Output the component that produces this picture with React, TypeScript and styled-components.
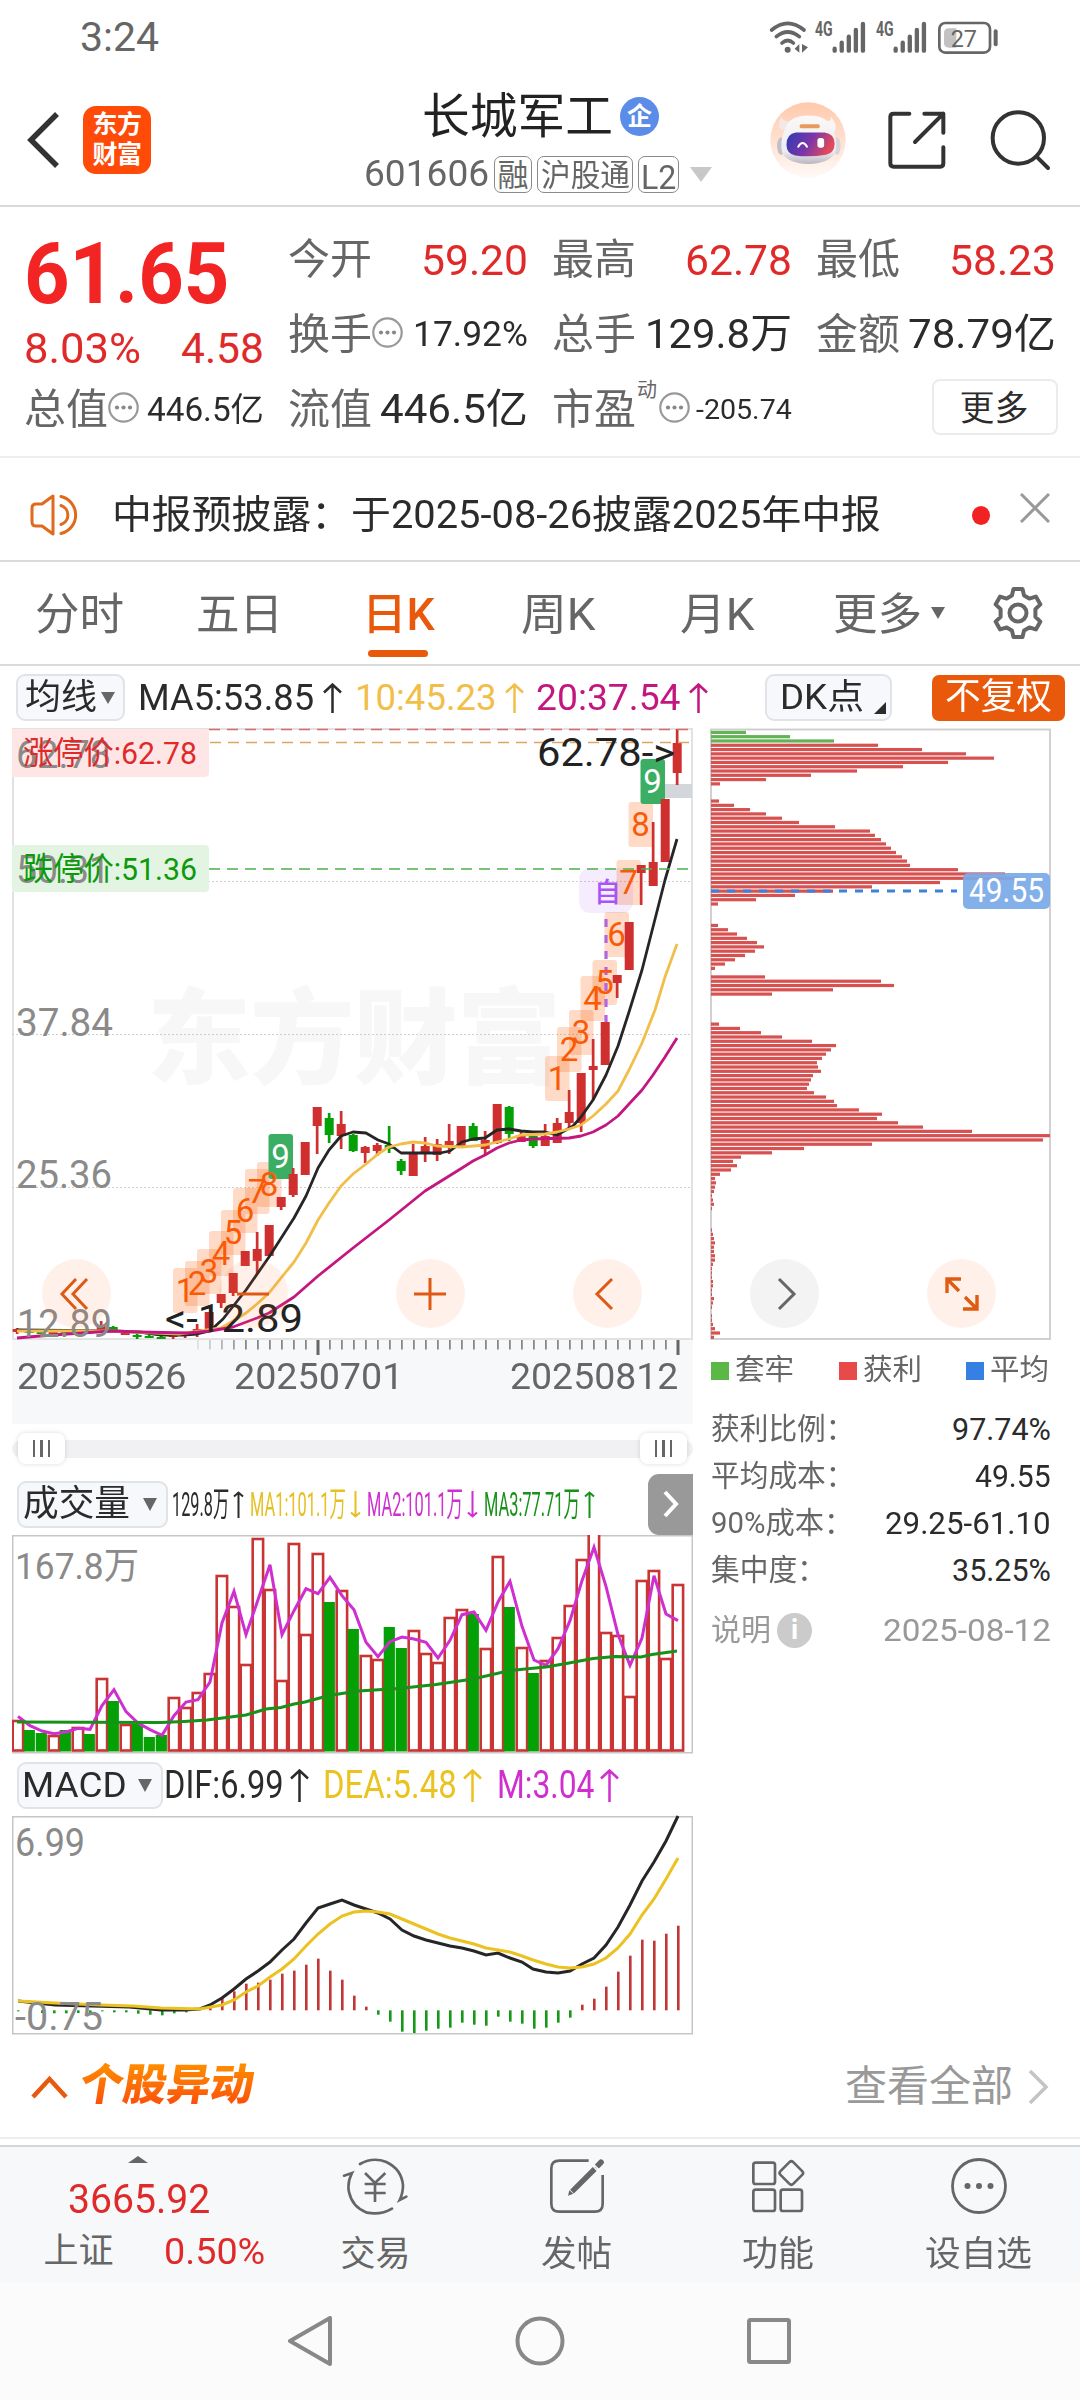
import React, { useLayoutEffect, useRef } from "react";
import styled, { createGlobalStyle, css } from "styled-components";

const FONT = `Roboto, "Noto Sans CJK SC", sans-serif`;
const RED = "#e02a2a";
const GREY = "#666666";
const INK = "#2b2b2b";
const ORANGE = "#e8590c";
const UP = "#cf2f2f";
const DOWN = "#05a005";

const GlobalStyle = createGlobalStyle`
  * { box-sizing: border-box; }
  body { margin: 0; background: #fff; font-family: ${FONT}; color: ${INK}; }
  svg { display: block; flex: none; }
  svg text { font-family: ${FONT}; }
`;

/* ---------- auto-fitting label ---------- */

const FitBox = styled.span<{ $w: number; $s: number; $c?: string; $b?: number; $ml?: number }>`
  display: block;
  flex: none;
  width: ${(p) => p.$w}px;
  height: ${(p) => Math.round(p.$s * 1.2)}px;
  line-height: ${(p) => Math.round(p.$s * 1.2)}px;
  font-size: ${(p) => p.$s}px;
  font-weight: ${(p) => p.$b ?? 400};
  margin-left: ${(p) => p.$ml ?? 0}px;
  color: ${(p) => p.$c ?? INK};
`;
const FitInner = styled.span`
  display: inline-block;
  white-space: nowrap;
  transform-origin: 0 50%;
`;

type FitProps = { w: number; s: number; c?: string; b?: number; ml?: number; children: React.ReactNode };
function Fit({ w, s, c, b, ml, children }: FitProps) {
  const ref = useRef<HTMLSpanElement>(null);
  useLayoutEffect(() => {
    const el = ref.current;
    if (el && el.offsetWidth) el.style.transform = `scaleX(${w / el.offsetWidth})`;
  }, [w, s, children]);
  return (
    <FitBox $w={w} $s={s} $c={c} $b={b} $ml={ml}>
      <FitInner ref={ref}>{children}</FitInner>
    </FitBox>
  );
}

/* ---------- shared small parts ---------- */

const Page = styled.main`
  width: 1080px;
  height: 2400px;
  display: flex;
  flex-direction: column;
  overflow: hidden;
  background: #fff;
`;

const Shift = styled.div<{ $l?: number; $t?: number }>`
  flex: none;
  margin-left: ${(p) => p.$l ?? 0}px;
  margin-top: ${(p) => p.$t ?? 0}px;
`;

const Caret = styled.i<{ $w: number; $h: number; $c?: string; $ml?: number; $up?: boolean }>`
  flex: none;
  width: 0;
  height: 0;
  margin-left: ${(p) => p.$ml ?? 0}px;
  border-left: ${(p) => p.$w / 2}px solid transparent;
  border-right: ${(p) => p.$w / 2}px solid transparent;
  ${(p) =>
    p.$up
      ? css`border-bottom: ${p.$h}px solid ${p.$c ?? GREY};`
      : css`border-top: ${p.$h}px solid ${p.$c ?? GREY};`}
`;

function Arrow({ w, h, c, down, ml }: { w: number; h: number; c: string; down?: boolean; ml: number }) {
  const m = w / 2;
  const d = down
    ? `M${m} 0V${h - 1}M1 ${h - m}L${m} ${h - 1.5}L${w - 1} ${h - m}`
    : `M${m} ${h}V1M1 ${m}L${m} 1.5L${w - 1} ${m}`;
  return (
    <Shift $l={ml}>
      <svg width={w} height={h} fill="none" stroke={c} strokeWidth={w < 15 ? 2 : 2.5}>
        <path d={d} />
      </svg>
    </Shift>
  );
}

function Dots() {
  return (
    <Shift $t={-5}>
      <svg width="31" height="31" viewBox="0 0 31 31" fill="none" stroke="#999" strokeWidth="2.2">
        <circle cx="15.5" cy="15.5" r="14.2" />
        <g fill="#888" stroke="none">
          <circle cx="9" cy="15.5" r="2.1" />
          <circle cx="15.5" cy="15.5" r="2.1" />
          <circle cx="22" cy="15.5" r="2.1" />
        </g>
      </svg>
    </Shift>
  );
}

/* ---------- status bar ---------- */

const StatusRow = styled.header`
  height: 74px;
  flex: none;
  display: flex;
  align-items: center;
  justify-content: space-between;
  padding: 1px 80px 0 80px;
`;

function StatusIcons() {
  const bars = (x: number) =>
    [0, 1, 2, 3, 4].map((i) => (
      <line key={i} x1={x + i * 21.2} x2={x + i * 21.2} y1={[112, 94, 76, 56, 38][i]} y2={118} />
    ));
  return (
    <svg width="231" height="36" viewBox="28 26 693 108" fill="none" stroke={GREY} strokeLinecap="round">
      <g strokeWidth="11">
        <path d="M36 56Q84 16 133 56" />
        <path d="M50 76Q84 48 119 76" />
        <path d="M67 95Q84 80 101 95" />
      </g>
      <circle cx="84" cy="115" r="9" fill={GREY} stroke="none" />
      <path d="M119 98V124L105 112ZM127 98V124L145 108Z" fill={GREY} stroke="none" />
      <g strokeWidth="13">
        {bars(225)}
        {bars(408)}
      </g>
      <g fill={GREY} stroke="none" fontSize="58" fontWeight="700">
        <text x="166" y="74" textLength="53" lengthAdjust="spacingAndGlyphs">4G</text>
        <text x="349" y="74" textLength="53" lengthAdjust="spacingAndGlyphs">4G</text>
      </g>
      <path d="M568 51H590V109H568Q553 109 553 95V65Q553 51 568 51Z" fill="#c2c2c2" stroke="none" />
      <rect x="539" y="35" width="152" height="89" rx="18" strokeWidth="8" />
      <line x1="708" x2="708" y1="60" y2="99" strokeWidth="12" />
      <text x="573" y="106" fontSize="74" fill={GREY} stroke="none" textLength="79" lengthAdjust="spacingAndGlyphs">27</text>
    </svg>
  );
}

/* ---------- title bar ---------- */

const TitleBar = styled.header`
  height: 133px;
  flex: none;
  display: grid;
  grid-template-columns: 362px 352px 1fr;
  border-bottom: 2px solid #dadada;
`;
const BrandSide = styled.div`
  display: flex;
  align-items: center;
  padding-left: 27px;
  gap: 23px;
`;
const Logo = styled.div`
  width: 68px;
  height: 68px;
  border-radius: 13px;
  background: #ff4a08;
  color: #fff;
  font-size: 25px;
  font-weight: 700;
  line-height: 30px;
  letter-spacing: -0.5px;
  display: grid;
  align-content: center;
  justify-content: center;
`;
const TitleMid = styled.div`
  padding-top: 18px;
  display: flex;
  flex-direction: column;
  gap: 14px;
`;
const TitleLine = styled.div`
  display: flex;
  align-items: center;
  height: 49px;
  padding: 1px 0 0 60px;
`;
const EntBadge = styled.span`
  width: 39px;
  height: 39px;
  margin: -2px 0 0 7px;
  border-radius: 50%;
  background: #5b8ce8;
  color: #fff;
  font-size: 25px;
  font-weight: 700;
  display: grid;
  place-items: center;
  line-height: 39px;
`;
const CodeLine = styled.div`
  display: flex;
  align-items: center;
  height: 38px;
  gap: 5px;
  padding-left: 2px;
`;
const Tag = styled.span<{ $w: number }>`
  width: ${(p) => p.$w}px;
  height: 37px;
  border: 1.5px solid #8a8a8a;
  border-radius: 7px;
  display: grid;
  place-items: center;
`;
const TitleActions = styled.div`
  display: flex;
  align-items: center;
  padding-left: 56px;
`;

function Robot() {
  return (
    <svg width="76" height="76" viewBox="33 275 226 226">
      <defs>
        <linearGradient id="rbBg" x1="0" y1="0" x2="0" y2="1">
          <stop offset="0" stopColor="#ffc9ab" />
          <stop offset=".5" stopColor="#ffe0d0" />
          <stop offset="1" stopColor="#fffaf8" />
        </linearGradient>
        <linearGradient id="rbVisor" x1="0" y1="0" x2="1" y2="0.3">
          <stop offset="0" stopColor="#2c3cb4" />
          <stop offset=".55" stopColor="#7a35a8" />
          <stop offset="1" stopColor="#e04a5c" />
        </linearGradient>
        <linearGradient id="rbHead" x1="0" y1="0" x2="0" y2="1">
          <stop offset="0" stopColor="#fbf8f8" />
          <stop offset=".75" stopColor="#ececf0" />
          <stop offset="1" stopColor="#b9b6c0" />
        </linearGradient>
      </defs>
      <circle cx="146" cy="388" r="112" fill="url(#rbBg)" />
      <path d="M66 318Q54 345 66 360L90 352Q96 340 88 332Q72 334 66 318Z" fill="#f1e9e8" />
      <path d="M214 318Q236 345 226 364L200 352Q196 340 204 332Q216 332 214 318Z" fill="#faf5f4" />
      <ellipse cx="66" cy="406" rx="12" ry="26" fill="#c4bfc6" />
      <ellipse cx="232" cy="406" rx="11" ry="26" fill="#dad4d8" />
      <path d="M148 315Q206 315 220 356Q236 400 226 428Q204 458 148 459Q90 458 70 428Q60 396 78 352Q92 315 148 315Z" fill="url(#rbHead)" />
      <rect x="121" y="341" width="60" height="12" rx="5" fill="#e79a5e" />
      <path d="M110 366H196Q224 370 225 398Q225 428 200 432Q150 440 108 434Q82 428 82 402Q82 370 110 366Z" fill="url(#rbVisor)" />
      <path d="M117 408Q130 386 143 408" fill="none" stroke="#fff" strokeWidth="6" strokeLinecap="round" />
      <rect x="174" y="382" width="20" height="29" rx="8" fill="#fff" />
    </svg>
  );
}

/* ---------- quote panel ---------- */

const Quote = styled.section`
  height: 251px;
  flex: none;
  padding: 15px 24px 0;
  display: grid;
  grid-template-columns: repeat(4, 264px);
  grid-template-rows: repeat(3, 75px);
  border-bottom: 2px solid #eeeeee;
`;
const PriceCell = styled.div`
  grid-row: span 2;
  display: flex;
  flex-direction: column;
`;
const BigPrice = styled.div`
  height: 102px;
  display: flex;
  align-items: center;
`;
const Cell = styled.div`
  width: 240px;
  display: flex;
  align-items: center;
  justify-content: space-between;
`;
const ChangeRow = styled(Cell)`
  height: 48px;
`;
const CellName = styled.div`
  display: flex;
  align-items: center;
`;
const DynamicMark = styled.sup`
  font-size: 20px;
  line-height: 20px;
  color: ${GREY};
  align-self: flex-start;
  margin: -5px 2px 0 1px;
`;
const MoreButton = styled.button`
  width: 126px;
  height: 56px;
  margin: -5px -2px 0 auto;
  border: 2px solid #ebebeb;
  border-radius: 8px;
  background: #fff;
  display: grid;
  place-items: center;
  padding: 0;
`;

function QuoteCell({ name, dots, mark, value, vw, vs, red }: {
  name: string; dots?: boolean; mark?: string; value: string; vw: number; vs: number; red?: boolean;
}) {
  return (
    <Cell>
      <CellName>
        <Fit w={84} s={41.5} c={GREY}>{name}</Fit>
        {mark && <DynamicMark>{mark}</DynamicMark>}
        {dots && <Dots />}
      </CellName>
      <Fit w={vw} s={vs} c={red ? RED : INK}>{value}</Fit>
    </Cell>
  );
}

/* ---------- notice and tabs ---------- */

const Notice = styled.section`
  height: 104px;
  flex: none;
  display: flex;
  align-items: center;
  padding: 12px 30px 0;
  border-bottom: 2px solid #dadada;
`;
const RedDot = styled.i`
  width: 19px;
  height: 19px;
  margin-left: 91px;
  border-radius: 50%;
  background: #f22222;
`;
const Tabs = styled.nav`
  height: 104px;
  flex: none;
  display: flex;
  align-items: center;
  border-bottom: 2px solid #dadada;
`;
const TabItem = styled.div<{ $on?: boolean }>`
  position: relative;
  width: 159.5px;
  height: 102px;
  padding-top: 5px;
  display: flex;
  align-items: center;
  justify-content: center;
  &::after {
    content: "";
    display: ${(p) => (p.$on ? "block" : "none")};
    position: absolute;
    left: 49px;
    bottom: 7px;
    width: 60px;
    height: 7px;
    border-radius: 4px;
    background: ${ORANGE};
  }
`;
const TabCaret = styled.span`
  position: absolute;
  display: flex;
  right: 12px;
  top: 45px;
`;

/* ---------- chart area ---------- */

const ToolRow = styled.div<{ $pl?: number }>`
  height: 62px;
  flex: none;
  display: flex;
  align-items: center;
  padding-left: ${(p) => p.$pl ?? 0}px;
`;
const TopTools = styled(ToolRow)`
  padding-top: 1px;
`;
const SelectBox = styled.div<{ $w: number; $ml?: number }>`
  width: ${(p) => p.$w}px;
  height: 47px;
  flex: none;
  margin-left: ${(p) => p.$ml ?? 0}px;
  border: 2px solid #e0e3e8;
  border-radius: 9px;
  background: #f6f8fb;
  display: flex;
  align-items: center;
  padding-left: 6px;
`;
const Corner = styled.i`
  align-self: flex-end;
  margin: 0 0 5px 10px;
  border-left: 12px solid transparent;
  border-bottom: 12px solid ${INK};
`;
const AdjustButton = styled.div`
  width: 133px;
  height: 46px;
  margin-left: 40px;
  border-radius: 7px;
  background: ${ORANGE};
  display: grid;
  place-items: center;
`;
const Body = styled.section`
  height: 1306px;
  flex: none;
  display: flex;
  padding-left: 12px;
  gap: 17px;
`;
const MainCol = styled.div`
  width: 681px;
  display: flex;
  flex-direction: column;
`;
const SideCol = styled.div`
  width: 341px;
  display: flex;
  flex-direction: column;
`;
const Canvas = styled.div`
  position: relative;
  flex: none;
`;
const FloatRow = styled.div<{ $l: number }>`
  position: absolute;
  left: ${(p) => p.$l}px;
  bottom: 12px;
  display: flex;
  gap: 108px;
`;
const Round = styled.div<{ $grey?: boolean }>`
  width: 69px;
  height: 69px;
  border-radius: 50%;
  background: ${(p) => (p.$grey ? "#f3f3f3" : "rgba(253, 120, 50, 0.1)")};
  display: grid;
  place-items: center;
`;
const AxisBand = styled.div`
  height: 84px;
  flex: none;
  background: #f7f8fa;
`;
const DateRow = styled.div`
  display: flex;
  align-items: center;
  height: 42px;
  padding-left: 5px;
`;
const SliderRow = styled.div`
  height: 49px;
  flex: none;
  display: flex;
  align-items: center;
`;
const Track = styled.div`
  width: 681px;
  height: 18px;
  border-radius: 9px;
  background: #f1f1f4;
  display: flex;
  align-items: center;
  justify-content: space-between;
  padding: 0 6px;
`;
const Handle = styled.div`
  width: 47px;
  height: 31px;
  border-radius: 8px;
  background: #fff;
  box-shadow: 0 0 5px rgba(0, 0, 0, 0.14);
  display: flex;
  align-items: center;
  justify-content: center;
  gap: 5px;
`;
const Grip = styled.i`
  width: 2.5px;
  height: 17px;
  background: ${GREY};
`;
const NextButton = styled.div`
  width: 45px;
  height: 61px;
  margin-left: auto;
  border-radius: 11px 0 0 11px;
  background: #999;
  display: grid;
  place-items: center;
`;
const LegendRow = styled.div`
  height: 61px;
  display: flex;
  align-items: center;
  justify-content: space-between;
  padding: 0 2px 0 1px;
`;
const LegendItem = styled.div`
  display: flex;
  align-items: center;
  gap: 6px;
`;
const Swatch = styled.i<{ $c: string }>`
  width: 18px;
  height: 18px;
  background: ${(p) => p.$c};
`;
const StatRow = styled.div<{ $h?: number }>`
  height: ${(p) => p.$h ?? 47}px;
  display: flex;
  align-items: center;
  justify-content: space-between;
  padding: 0 0 0 1px;
`;
const InfoMark = styled.i`
  width: 35px;
  height: 35px;
  border-radius: 50%;
  background: #cbcbcb;
  color: #fff;
  font: 700 27px/35px Roboto, sans-serif;
  text-align: center;
`;

const X0 = 5;
const STEP = 12;
const cx = (i: number) => X0 + i * STEP;

// [index, high, bodyTop, bodyBottom, low, up]
const CANDLES: [number, number, number, number, number, boolean][] = [
  [0, 600, 601, 604, 606, true], [1, 602, 603, 605, 605, false], [2, 603, 604, 606, 606, false],
  [3, 603, 604, 606, 607, true], [4, 603, 604, 606, 606, false], [5, 602, 603, 605, 606, true],
  [6, 602, 603, 605, 606, false], [7, 593, 598, 603, 604, true], [8, 598, 599, 603, 604, false],
  [9, 603, 604, 607, 607, true], [10, 606, 607, 609, 611, false], [11, 607, 608, 610, 610, false],
  [12, 608, 609, 611, 611, false], [13, 605, 607, 609, 611, true], [14, 604, 606, 608, 610, true],
  [15, 596, 601, 605, 609, true], [16, 584, 584, 601, 601, true], [17, 566, 566, 575, 580, true],
  [18, 545, 545, 565, 568, true], [19, 523, 523, 538, 538, true], [20, 504, 521, 533, 546, true],
  [21, 497, 497, 528, 528, true], [22, 469, 469, 479, 482, true], [23, 440, 446, 467, 469, true],
  [24, 414, 414, 447, 447, true], [25, 379, 379, 398, 426, true], [26, 385, 390, 407, 415, false],
  [27, 383, 396, 408, 421, true], [28, 406, 407, 423, 424, false], [29, 418, 419, 425, 435, true],
  [30, 415, 417, 423, 428, true], [31, 398, 417, 421, 425, false], [32, 431, 433, 443, 447, false],
  [33, 416, 426, 448, 448, true], [34, 409, 418, 425, 434, true], [35, 411, 416, 427, 433, true],
  [36, 396, 413, 419, 426, true], [37, 398, 398, 419, 419, true], [38, 395, 398, 413, 413, false],
  [39, 403, 412, 421, 427, true], [40, 376, 376, 415, 416, true], [41, 378, 379, 406, 413, false],
  [42, 404, 407, 414, 414, true], [43, 406, 408, 418, 420, false], [44, 396, 408, 418, 418, true],
  [45, 390, 395, 415, 415, true], [46, 362, 384, 395, 400, true], [47, 345, 345, 395, 404, true],
  [48, 311, 338, 342, 372, true], [49, 294, 294, 337, 337, true], [50, 247, 247, 255, 270, true],
  [51, 194, 194, 242, 242, true], [52, 137, 137, 145, 177, true], [53, 94, 134, 158, 158, true],
  [54, 71, 71, 134, 134, true], [55, 1, 15, 45, 57, true],
];

const MA5 = "5,602 100,603 127,604 149,607 171,607 185,606 198,603 211,591 234,562 257,529 282,490 294,468 306,440 317,422 329,408 341,404 354,405 366,412 377,416 389,425 401,425 428,425 438,423 450,414 461,411 473,410 485,402 497,401 509,403 521,404 533,404 545,407 561,398 569,389 581,372 594,347 606,318 617,284 630,242 641,199 653,152 665,111";
const MA10 = "5,603 100,603 167,606 209,600 221,593 234,585 245,576 257,565 269,550 282,534 294,515 306,492 317,475 329,458 341,446 354,436 366,426 377,419 389,416 401,414 413,415 425,418 450,419 473,417 485,414 497,411 509,407 533,406 545,404 557,401 569,397 581,388 594,376 606,363 617,342 630,315 643,282 653,249 665,216";
const MA20 = "5,610 28,608 55,606 100,603 127,604 176,605 198,603 221,599 245,590 257,585 282,569 306,548 341,520 377,492 413,463 450,440 461,433 473,427 485,420 497,415 509,412 521,411 557,410 569,408 581,404 594,397 606,388 617,376 630,362 641,347 653,329 665,310";

// [text, left, top] of the nine-turn sequence marks
const MARKS: [string, number, number][] = [
  ["1", 161, 540], ["2", 173, 533], ["3", 185, 521], ["4", 197, 503], ["5", 209, 482], ["6", 221, 460],
  ["7", 233, 441], ["8", 245, 434], ["9", 256.5, 406],
  ["1", 533, 328], ["2", 545, 299], ["3", 557, 282], ["4", 568.5, 248], ["5", 580.5, 232], ["6", 592.5, 184],
  ["7", 604.5, 132], ["8", 616.5, 74], ["9", 628.5, 31],
];

function KChart() {
  return (
    <svg width="681" height="612" viewBox="0 0 681 612" overflow="visible">
      <rect x="1" y="1" width="679" height="610" fill="#fff" stroke="#e2e2e2" strokeWidth="2" />
      <text x="135" y="348" fontSize="104" fontWeight="900" fill="#f7f7f7" textLength="414">东方财富</text>
      <g stroke="#cfcfcf" strokeDasharray="2 2">
        <path d="M0 153.5H680M0 306.5H680M0 459.5H680" />
      </g>
      <rect x="640" y="56" width="40" height="14" fill="#d3d6db" />
      {MARKS.map(([t, x, y], k) => (
        <rect key={k} x={x} y={y} width="24.5" height="45" rx="3" fill={t === "9" ? "#3cae63" : "#fa6414"} fillOpacity={t === "9" ? 1 : 0.24} />
      ))}
      <rect x="567" y="140" width="54" height="45" rx="11" fill="#a050f0" fillOpacity=".1" />
      <text x="582" y="174" fontSize="27" fill="#a855f7" fontWeight="500" textLength="24">自</text>
      <path d="M594 191V294" stroke="#b565e0" strokeWidth="3.2" strokeDasharray="8 8" />
      {CANDLES.map(([i, h, t, b, l, up]) => (
        <g key={i} fill={up ? UP : DOWN}>
          <rect x={3.8 + i * STEP} y={h} width="2.7" height={l - h} />
          <rect x={0.7 + i * STEP} y={t} width="9" height={b - t} />
        </g>
      ))}
      <g fill="none" strokeWidth="2.8" strokeLinejoin="round">
        <polyline points={MA5} stroke="#262626" />
        <polyline points={MA10} stroke="#f2be4a" />
        <polyline points={MA20} stroke="#c4167f" />
      </g>
      {MARKS.map(([t, x, y], k) => (
        <text key={k} x={x + 12} y={y + 34} fontSize="33" textAnchor="middle" fill={t === "9" ? "#fff" : "#fa5a05"}>{t}</text>
      ))}
      <g strokeWidth="1.6" strokeDasharray="11 7">
        <path d="M197 1.5H680" stroke="#d86a6a" />
        <path d="M0 14.5H680" stroke="#dfa566" />
        <path d="M197 141H680" stroke="#4cb04c" />
      </g>
      <path d="M0 1H193Q197 1 197 5V45Q197 49 193 49H0Z" fill="#fee6e6" />
      <path d="M0 117H193Q197 117 197 121V160Q197 164 193 164H0Z" fill="#e3f4e3" />
      <g fill="#8a8a8a" fontSize="38">
        <text x="4" y="40" textLength="95" lengthAdjust="spacingAndGlyphs">62.78</text>
        <text x="4" y="155" textLength="94" lengthAdjust="spacingAndGlyphs">50.31</text>
        <text x="4" y="308" textLength="97" lengthAdjust="spacingAndGlyphs">37.84</text>
        <text x="4" y="460" textLength="96" lengthAdjust="spacingAndGlyphs">25.36</text>
        <text x="5" y="609" textLength="95" lengthAdjust="spacingAndGlyphs">12.89</text>
      </g>
      <g fontSize="32">
        <text x="11" y="36" fill={RED} textLength="174" lengthAdjust="spacingAndGlyphs">涨停价:62.78</text>
        <text x="11" y="152" fill="#0c9a0c" textLength="174" lengthAdjust="spacingAndGlyphs">跌停价:51.36</text>
      </g>
      <g fontSize="39" fill="#222">
        <text x="525" y="38" textLength="138" lengthAdjust="spacingAndGlyphs">62.78-&gt;</text>
        <text x="153" y="604" textLength="138" lengthAdjust="spacingAndGlyphs">&lt;-12.89</text>
      </g>
    </svg>
  );
}

function AxisTicks() {
  return (
    <svg width="681" height="16">
      {Array.from({ length: 41 }, (_, k) => k + 15).map((i) => (
        <rect key={i} x={5 + i * 12} y="0" width="1.8" height="9.5" fill="#888" opacity={Math.min(1, (i - 14) / 5)} />
      ))}
      <rect x="304.5" y="0" width="3" height="15" fill="#666" />
      <rect x="664.5" y="0" width="3" height="15" fill="#666" />
    </svg>
  );
}

const PROFILE: Record<number, number[]> = {
  0: [35, 79, 123, 167, 211, 255, 283, 237, 192, 146, 100, 55, 9],
  16: [8, 23, 39, 55, 71, 88, 124, 159, 164, 170, 175, 180, 185, 191, 196, 199, 247, 294, 308, 229, 161, 122, 84, 45, 7],
  45: [7, 17, 26, 36, 46, 53, 44, 34, 24, 14, 4],
  57: [54, 170, 183, 122, 61],
  68: [8, 29, 50, 71, 101, 125, 120, 115, 111, 106, 107, 110, 102, 100, 98, 96, 103, 115, 123, 126, 148, 171, 166, 187, 212, 261, 339, 332, 161, 93, 61, 30, 22, 26, 20, 9, 4, 5, 4, 3, 1, 2, 3, 1],
  116: [1, 2, 3, 4, 3, 3, 4, 4, 2, 1, 1, 1, 2, 2, 1, 1, 3, 2, 1, 0, 1, 1, 2, 4, 9, 3],
};

function ChipChart() {
  return (
    <svg width="341" height="612" viewBox="0 0 341 612">
      <rect x="1" y="1.5" width="339" height="609.5" fill="#fff" stroke="#cccccc" strokeWidth="1.8" />
      {Object.entries(PROFILE).flatMap(([start, list]) =>
        list.map((w, j) => {
          const k = Number(start) + j;
          return <rect key={k} x="1" y={2.8 + 4.29 * k} width={w} height="3.2" fill={k < 3 ? "#62b354" : "#d75151"} />;
        })
      )}
      <path d="M1 163H247" stroke="#3a82dc" strokeWidth="3" strokeDasharray="8 8" />
      <rect x="253" y="145" width="87" height="36" rx="5" fill="#79a9e8" fillOpacity=".92" />
      <text x="259" y="174" fontSize="33" fill="#fff" textLength="75" lengthAdjust="spacingAndGlyphs">49.55</text>
    </svg>
  );
}

// bar tops in chart pixels; negative values are falling days
const VOLUME = [
  185, -195, -198, 200, -195, 192, -199, 143, -166, 189, -189, -202, -200, 162, 172, 157, 138, 40, 71, 129, 3, 54, 145,
  8, 99, 18, -67, 55, -94, 120, 124, -92, -113, 95, 118, 127, 82, 74, -79, 113, 21, -72, 112, -138, 125, 102, 70, 24, 0,
  97, 100, 161, 45, 35, 123, 49,
];
const VOL_MA = [
  1130, 1158, 1174, 1182, 1177, 1166, 1169, 1098, 1050, 1116, 1150, 1170, 1187, 1128, 1087, 1080, 1027, 850, 755, 885,
  780, 675, 885, 813, 747, 762, 713, 768, 810, 908, 951, 906, 892, 898, 908, 955, 902, 825, 817, 872, 787, 725, 860, 961,
  977, 927, 843, 723, 623, 740, 885, 977, 895, 708, 823, 843,
].map((v, i) => `${cx(i) + 1},${(v - 586) / 3}`).join(" ");

function VolumeChart() {
  return (
    <svg width="681" height="219" viewBox="0 0 681 219">
      <rect x=".75" y=".75" width="679.5" height="217" fill="#fff" stroke="#c6c6c6" strokeWidth="1.5" />
      <text x="3" y="44" fontSize="37" fill="#8a8a8a" textLength="124" lengthAdjust="spacingAndGlyphs">167.8万</text>
      {VOLUME.map((v, i) => {
        const top = Math.abs(v);
        return v < 0 ? (
          <rect key={i} x={cx(i) - 5.3} y={top} width="11.2" height={216.5 - top} fill="#05a005" />
        ) : (
          <rect key={i} x={cx(i) - 4.3} y={top ? top + 1 : -4} width="10.4" height={top ? 214.5 - top : 219.5} fill="#fff" stroke="#c93535" strokeWidth="2.6" />
        );
      })}
      <polyline points={VOL_MA} fill="none" stroke="#cf2fcf" strokeWidth="3" />
      <polyline
        points="5,187 149,187.5 172,186.5 195,185 234,180 254,174 269,172.5 282,169 293,167 317,160.5 346,156 387,153.5 424,149.5 461,144 498,135.5 534,132 557,128 581,123.5 603,121.5 629,122 640,119.5 665,116"
        fill="none" stroke="#179117" strokeWidth="3"
      />
    </svg>
  );
}

const MACD_BARS = [
  815, 815, 820, 821, 821, 820, 821, 815, 818, 818, 822, 825, 827, 821, 818, 812, 797, 776, 755, 732, 729, 720, 702, 693,
  675, 657, 693, 720, 768, 801, 825, 846, 876, 880, 873, 867, 864, 849, 855, 858, 831, 846, 852, 867, 864, 849, 834, 795,
  777, 741, 696, 648, 600, 603, 582, 558,
].map((v) => (v - 229) / 3);
const MACD_ZERO = (812 - 229) / 3;

const DIF = "6,185 43,189 80,190 117,191 149,194 172,194 188,193 198,189 210,182 222,173 234,163 246,155 258,146 270,134 282,123 294,107 306,92 318,88 330,84 342,89 354,93 366,97 378,103 390,114 402,120 414,124 426,127 438,130 450,132 462,135 474,139 486,137 498,142 510,146 521,153 534,156 546,157 558,155 570,148 582,142 594,129 606,111 618,89 630,65 642,46 654,25 666,0";
const DEA = "6,185 43,187 89,189 121,190 149,192 188,193 210,189 222,184 234,176 246,170 258,161 270,153 282,143 294,130 306,118 318,108 330,100 342,96 354,95 366,96 378,98 390,103 402,108 414,113 426,118 438,122 450,125 462,128 474,132 486,134 498,136 510,140 521,144 534,148 546,151 558,152 570,151 582,148 594,142 606,132 618,118 630,99 642,83 654,63 666,42";

function MacdChart() {
  return (
    <svg width="681" height="219" viewBox="0 0 681 219" overflow="visible">
      <rect x=".75" y=".75" width="679.5" height="217" fill="#fff" stroke="#c6c6c6" strokeWidth="1.5" />
      {MACD_BARS.map((y, i) => (
        <rect key={i} x={cx(i)} y={Math.min(y, MACD_ZERO)} width="2.6" height={Math.abs(y - MACD_ZERO)} fill={y < MACD_ZERO ? "#c23636" : "#149a14"} />
      ))}
      <polyline points={DIF} fill="none" stroke="#262626" strokeWidth="3" />
      <polyline points={DEA} fill="none" stroke="#ebc21f" strokeWidth="3" />
      <text x="3" y="40" fontSize="38" fill="#8a8a8a" textLength="70" lengthAdjust="spacingAndGlyphs">6.99</text>
      <text x="3" y="214" fontSize="38" fill="#8a8a8a" textLength="88" lengthAdjust="spacingAndGlyphs">-0.75</text>
    </svg>
  );
}

/* ---------- lower sections ---------- */

const MoveRow = styled.section`
  height: 105px;
  flex: none;
  display: flex;
  align-items: center;
  padding: 3px 29px 0 31px;
  border-bottom: 2px solid #eeeeee;
`;
const MoveTitle = styled.h2`
  margin: -3px auto 0 12px;
  font-size: 43.5px;
  line-height: 56px;
  font-weight: 900;
  transform: skewX(-9deg);
  background: linear-gradient(#ff8a00 15%, #fb4f0c 85%);
  background-clip: text;
  -webkit-background-clip: text;
  color: transparent;
`;
const BottomBar = styled.footer`
  height: 137px;
  flex: none;
  margin-top: 6px;
  border-top: 2px solid #d3d6da;
  background: #f7f8fa;
  display: flex;
`;
const IndexBlock = styled.div`
  width: 275px;
  display: flex;
  flex-direction: column;
  align-items: center;
  padding-top: 9px;
`;
const IndexValue = styled.div`
  margin: 12px 0 6px 3px;
`;
const IndexRow = styled.div`
  width: 224px;
  margin-left: 30px;
  display: flex;
  align-items: center;
  justify-content: space-between;
`;
const BarItem = styled.div`
  width: 201px;
  display: flex;
  flex-direction: column;
  align-items: center;
  gap: 9px;
`;
const BarIcon = styled.div`
  height: 78px;
  display: grid;
  place-items: center;
`;
const SystemNav = styled.nav`
  flex: 1;
  background: #fbfbfb;
  display: flex;
  justify-content: center;
  gap: 182px;
  padding-top: 34px;
`;

const MA_ROW: [string, number, string, number, number][] = [
  ["MA5:53.85", 176, INK, 13, 9],
  ["10:45.23", 142, "#f2be4a", 13, 8],
  ["20:37.54", 145, "#c4167f", 12, 8],
];

export default function App() {
  return (
    <Page>
      <GlobalStyle />
      <StatusRow>
        <Fit w={79} s={41} c={GREY}>3:24</Fit>
        <StatusIcons />
      </StatusRow>

      <TitleBar>
        <BrandSide>
          <svg width="33" height="56" viewBox="0 0 33 56" fill="none" stroke="#333" strokeWidth="5.5">
            <path d="M30 2L4 28L30 54" />
          </svg>
          <Logo>
            <span>东方</span>
            <span>财富</span>
          </Logo>
        </BrandSide>
        <TitleMid>
          <TitleLine>
            <Fit w={191} s={47.5} c="#222">长城军工</Fit>
            <EntBadge>企</EntBadge>
          </TitleLine>
          <CodeLine>
            <Fit w={125} s={36.5} c={GREY}>601606</Fit>
            <Tag $w={38}><Fit w={31} s={31} c={GREY}>融</Fit></Tag>
            <Tag $w={96}><Fit w={89} s={31} c={GREY}>沪股通</Fit></Tag>
            <Tag $w={41}><Fit w={35} s={34} c={GREY}>L2</Fit></Tag>
            <Caret $w={22} $h={15} $c="#c8c8c8" $ml={6} />
          </CodeLine>
        </TitleMid>
        <TitleActions>
          <Robot />
          <Shift $l={41}>
            <svg width="60" height="60" viewBox="380 298 180 180" fill="none" stroke="#333" strokeWidth="12" strokeLinecap="round" strokeLinejoin="round">
              <path d="M447 309H400Q390 309 390 319V458Q390 468 400 468H540Q549 468 549 458V410M492 309H549V366M464 394L549 309" />
            </svg>
          </Shift>
          <Shift $l={42}>
            <svg width="62" height="62" viewBox="688 292 186 186" fill="none" stroke="#333" strokeWidth="12" strokeLinecap="round">
              <circle cx="776" cy="379" r="77" />
              <path d="M830 434L865 469" />
            </svg>
          </Shift>
        </TitleActions>
      </TitleBar>

      <Quote>
        <PriceCell>
          <BigPrice>
            <Fit w={205} s={86} b={700} c="#f22424">61.65</Fit>
          </BigPrice>
          <ChangeRow>
            <Fit w={117} s={42.5} c={RED}>8.03%</Fit>
            <Fit w={83} s={42.5} c={RED}>4.58</Fit>
          </ChangeRow>
        </PriceCell>
        <QuoteCell name="今开" value="59.20" vw={107} vs={43} red />
        <QuoteCell name="最高" value="62.78" vw={107} vs={43} red />
        <QuoteCell name="最低" value="58.23" vw={107} vs={43} red />
        <QuoteCell name="换手" dots value="17.92%" vw={115} vs={34.5} />
        <QuoteCell name="总手" value="129.8万" vw={147} vs={41} />
        <QuoteCell name="金额" value="78.79亿" vw={148} vs={41} />
        <QuoteCell name="总值" dots value="446.5亿" vw={117} vs={33} />
        <QuoteCell name="流值" value="446.5亿" vw={148} vs={41} />
        <QuoteCell name="市盈" dots mark="动" value="-205.74" vw={96} vs={28} />
        <Cell>
          <MoreButton><Fit w={70} s={35}>更多</Fit></MoreButton>
        </Cell>
      </Quote>

      <Notice>
        <svg width="50" height="42" viewBox="0 0 50 42" fill="none" stroke="#e06a1c" strokeWidth="3" strokeLinejoin="round" strokeLinecap="round">
          <path d="M23 2L12 10H6Q2 10 2 14V28Q2 32 6 32H12L23 40Z" />
          <path d="M31 2.5A19 19 0 0 1 31 39.5M31 11.5A10 10 0 0 1 31 30.5" />
        </svg>
        <Fit ml={32} w={769} s={38.5}>中报预披露：于2025-08-26披露2025年中报</Fit>
        <RedDot />
        <Shift $l={30} $t={-15}>
          <svg width="30" height="30" fill="none" stroke="#999" strokeWidth="3">
            <path d="M1 1L29 29M29 1L1 29" />
          </svg>
        </Shift>
      </Notice>

      <Tabs>
        <TabItem><Fit w={89} s={44} c={GREY}>分时</Fit></TabItem>
        <TabItem><Fit w={87} s={44} c={GREY}>五日</Fit></TabItem>
        <TabItem $on><Fit w={73} s={44} c={ORANGE} b={500}>日K</Fit></TabItem>
        <TabItem><Fit w={75} s={44} c={GREY}>周K</Fit></TabItem>
        <TabItem><Fit w={75} s={44} c={GREY}>月K</Fit></TabItem>
        <TabItem>
          <Fit w={89} s={44} c={GREY}>更多</Fit>
          <TabCaret><Caret $w={15} $h={12} /></TabCaret>
        </TabItem>
        <Shift $l={34}>
          <svg width="54" height="54" viewBox="0 0 54 54" fill="none" stroke={GREY} strokeWidth="4" strokeLinejoin="round">
            <path d="M22.5 3h9l1.6 6.6 5.2 3 6.6-2 4.5 7.8-5 4.7v7.8l5 4.7-4.5 7.8-6.6-2-5.2 3L31.5 51h-9l-1.6-6.6-5.2-3-6.6 2-4.5-7.8 5-4.7v-7.8l-5-4.7 4.5-7.8 6.6 2 5.200-3z" />
            <circle cx="27" cy="27" r="8.5" />
          </svg>
        </Shift>
      </Tabs>

      <TopTools $pl={16}>
        <SelectBox $w={109}>
          <Fit ml={1} w={72} s={35}>均线</Fit>
          <Caret $w={14} $h={12} $ml={4} />
        </SelectBox>
        {MA_ROW.map(([t, w, c, ml, aml]) => (
          <React.Fragment key={t}>
            <Fit ml={ml} w={w} s={36.5} c={c}>{t}</Fit>
            <Arrow ml={aml} w={19} h={30} c={c} />
          </React.Fragment>
        ))}
        <SelectBox $w={127} $ml={57}>
          <Fit ml={7} w={84} s={35}>DK点</Fit>
          <Corner />
        </SelectBox>
        <AdjustButton><Fit w={107} s={36} c="#fff">不复权</Fit></AdjustButton>
      </TopTools>

      <Body>
        <MainCol>
          <Canvas>
            <KChart />
            <FloatRow $l={29.5}>
              <Round>
                <svg width="34" height="34" fill="none" stroke="#dd5a16" strokeWidth="3"><path d="M17 2L3 17L17 32M28 2L14 17L28 32" /></svg>
              </Round>
              <Round>
                <svg width="34" height="34" stroke="#dd5a16" strokeWidth="3"><path d="M1 17H33" /></svg>
              </Round>
              <Round>
                <svg width="34" height="34" stroke="#dd5a16" strokeWidth="3"><path d="M1 17H33M17 1V33" /></svg>
              </Round>
              <Round>
                <svg width="34" height="34" fill="none" stroke="#dd5a16" strokeWidth="3"><path d="M22 2L7 17L22 32" /></svg>
              </Round>
            </FloatRow>
          </Canvas>
          <AxisBand>
            <AxisTicks />
            <DateRow>
              <Fit w={169} s={37} c={GREY}>20250526</Fit>
              <Fit ml={48} w={169} s={37} c={GREY}>20250701</Fit>
              <Fit ml={107} w={168} s={37} c={GREY}>20250812</Fit>
            </DateRow>
          </AxisBand>
          <SliderRow>
            <Track>
              <Handle><Grip /><Grip /><Grip /></Handle>
              <Handle><Grip /><Grip /><Grip /></Handle>
            </Track>
          </SliderRow>
          <ToolRow $pl={5}>
            <SelectBox $w={151}>
              <Fit ml={-2} w={107} s={36}>成交量</Fit>
              <Caret $w={15} $h={13} $ml={13} />
            </SelectBox>
            <Fit ml={4} w={57} s={34}>129.8万</Fit>
            <Arrow ml={4} w={11} h={27} c={INK} />
            <Fit ml={6} w={96} s={34} c="#e6bf20">MA1:101.1万</Fit>
            <Arrow ml={4} w={11} h={27} c="#e6bf20" down />
            <Fit ml={6} w={96} s={34} c="#cf2fcf">MA2:101.1万</Fit>
            <Arrow ml={4} w={11} h={27} c="#cf2fcf" down />
            <Fit ml={6} w={96} s={34} c="#179117">MA3:77.71万</Fit>
            <Arrow ml={4} w={11} h={27} c="#179117" />
            <NextButton>
              <svg width="18" height="28" fill="none" stroke="#fff" strokeWidth="4"><path d="M3 2L14 14L3 26" /></svg>
            </NextButton>
          </ToolRow>
          <VolumeChart />
          <ToolRow $pl={5}>
            <SelectBox $w={146}>
              <Fit ml={-3} w={105} s={35.5}>MACD</Fit>
              <Caret $w={15} $h={13} $ml={11} />
            </SelectBox>
            <Fit ml={1} w={120} s={38}>DIF:6.99</Fit>
            <Arrow ml={6} w={19} h={33} c={INK} />
            <Fit ml={14} w={134} s={38} c="#ebc21f">DEA:5.48</Fit>
            <Arrow ml={6} w={19} h={33} c="#ebc21f" />
            <Fit ml={15} w={97} s={38} c="#cf2fcf">M:3.04</Fit>
            <Arrow ml={6} w={19} h={33} c="#cf2fcf" />
          </ToolRow>
          <MacdChart />
        </MainCol>

        <SideCol>
          <Canvas>
            <ChipChart />
            <FloatRow $l={40}>
              <Round $grey>
                <svg width="34" height="34" fill="none" stroke={GREY} strokeWidth="3"><path d="M11 2L26 17L11 32" /></svg>
              </Round>
              <Round>
                <svg width="34" height="34" fill="none" stroke="#e05a12" strokeWidth="3.4"><path d="M16 2H2V16M2 2L14 14M20 20L32 32M32 18V32H18" /></svg>
              </Round>
            </FloatRow>
          </Canvas>
          <LegendRow>
            <LegendItem><Swatch $c="#5cb846" /><Fit w={59} s={29} c={GREY}>套牢</Fit></LegendItem>
            <LegendItem><Swatch $c="#e84a4a" /><Fit w={59} s={29} c={GREY}>获利</Fit></LegendItem>
            <LegendItem><Swatch $c="#3580e2" /><Fit w={59} s={29} c={GREY}>平均</Fit></LegendItem>
          </LegendRow>
          <Shift $t={5} />
          <StatRow><Fit w={144} s={29.5} c={GREY}>获利比例：</Fit><Fit w={99} s={30.5}>97.74%</Fit></StatRow>
          <StatRow><Fit w={144} s={29.5} c={GREY}>平均成本：</Fit><Fit w={76} s={30.5}>49.55</Fit></StatRow>
          <StatRow><Fit w={142} s={29.5} c={GREY}>90%成本：</Fit><Fit w={166} s={30.5}>29.25-61.10</Fit></StatRow>
          <StatRow><Fit w={115} s={29.5} c={GREY}>集中度：</Fit><Fit w={99} s={30.5}>35.25%</Fit></StatRow>
          <StatRow $h={72}>
            <LegendItem><Fit w={60} s={29.5} c="#999">说明</Fit><InfoMark>i</InfoMark></LegendItem>
            <Fit w={168} s={30.5} c="#999">2025-08-12</Fit>
          </StatRow>
        </SideCol>
      </Body>

      <MoveRow>
        <svg width="37" height="24" fill="none" stroke={ORANGE} strokeWidth="4.5"><path d="M2 22L18.5 4L35 22" /></svg>
        <MoveTitle>个股异动</MoveTitle>
        <Fit w={168} s={42} c="#999">查看全部</Fit>
        <Shift $l={14}>
          <svg width="24" height="36" fill="none" stroke="#c4c4c4" strokeWidth="3.5"><path d="M3 2L19 18L3 34" /></svg>
        </Shift>
      </MoveRow>

      <BottomBar>
        <IndexBlock>
          <Caret $w={20} $h={7} $up />
          <IndexValue><Fit w={142} s={40.5} c={RED}>3665.92</Fit></IndexValue>
          <IndexRow>
            <Fit ml={3} w={70} s={35} c={GREY}>上证</Fit>
            <Fit w={101} s={37} c={RED}>0.50%</Fit>
          </IndexRow>
        </IndexBlock>
        <BarItem>
          <BarIcon>
            <svg width="67" height="60" viewBox="67 46 201 180" fill="none" stroke={GREY} strokeWidth="8" strokeLinecap="round">
              <path d="M121 70Q160 48 200 64Q246 86 250 134Q250 158 240 178L260 168M73 105L97 97Q82 126 88 154Q98 200 142 216Q184 224 217 204" />
              <path d="M139 100L166 127L194 100M166 127V180M139 130H194M139 157H194" strokeLinecap="square" />
            </svg>
          </BarIcon>
          <Fit w={70} s={35} c={GREY}>交易</Fit>
        </BarItem>
        <BarItem>
          <BarIcon>
            <svg width="58" height="58" viewBox="684 50 174 174" fill="none" stroke={GREY} strokeWidth="8">
              <path d="M806 61H718Q694 61 694 84V190Q694 214 718 214H824Q848 214 848 190V104" />
              <path d="M824 86L756 154" strokeWidth="16" />
              <path d="M748 150L744 166L760 160Z" fill={GREY} stroke="none" />
              <path d="M833 76L843 66" strokeWidth="17" strokeLinecap="round" />
              <path d="M819 70L839 90" strokeWidth="4" stroke="#f7f8fa" />
            </svg>
          </BarIcon>
          <Fit w={71} s={35} c={GREY}>发帖</Fit>
        </BarItem>
        <BarItem>
          <BarIcon>
            <svg width="54" height="54" viewBox="1294 55 162 162" fill="none" stroke={GREY} strokeWidth="8" strokeLinejoin="round">
              <rect x="1301" y="66" width="65" height="64" rx="7" />
              <rect x="1301" y="147" width="65" height="64" rx="7" />
              <rect x="1383" y="147" width="64" height="64" rx="7" />
              <rect x="1388" y="70" width="54" height="54" rx="8" transform="rotate(45 1415 97)" />
            </svg>
          </BarIcon>
          <Fit w={72} s={35} c={GREY}>功能</Fit>
        </BarItem>
        <BarItem>
          <BarIcon>
            <svg width="58" height="58" fill="none" stroke={GREY} strokeWidth="2.8">
              <circle cx="29" cy="29" r="26.5" />
              <g fill={GREY} stroke="none">
                <circle cx="17.5" cy="29" r="3" /><circle cx="29" cy="29" r="3" /><circle cx="40.5" cy="29" r="3" />
              </g>
            </svg>
          </BarIcon>
          <Fit w={107} s={35} c={GREY}>设自选</Fit>
        </BarItem>
      </BottomBar>

      <SystemNav>
        <svg width="46" height="50" fill="none" stroke="#888" strokeWidth="4" strokeLinejoin="round"><path d="M43 2V48L3 25Z" /></svg>
        <svg width="50" height="50" fill="none" stroke="#888" strokeWidth="4"><circle cx="25" cy="25" r="22.5" /></svg>
        <svg width="46" height="50" fill="none" stroke="#888" strokeWidth="4"><rect x="2" y="4" width="40" height="42" rx="1.5" /></svg>
      </SystemNav>
    </Page>
  );
}
